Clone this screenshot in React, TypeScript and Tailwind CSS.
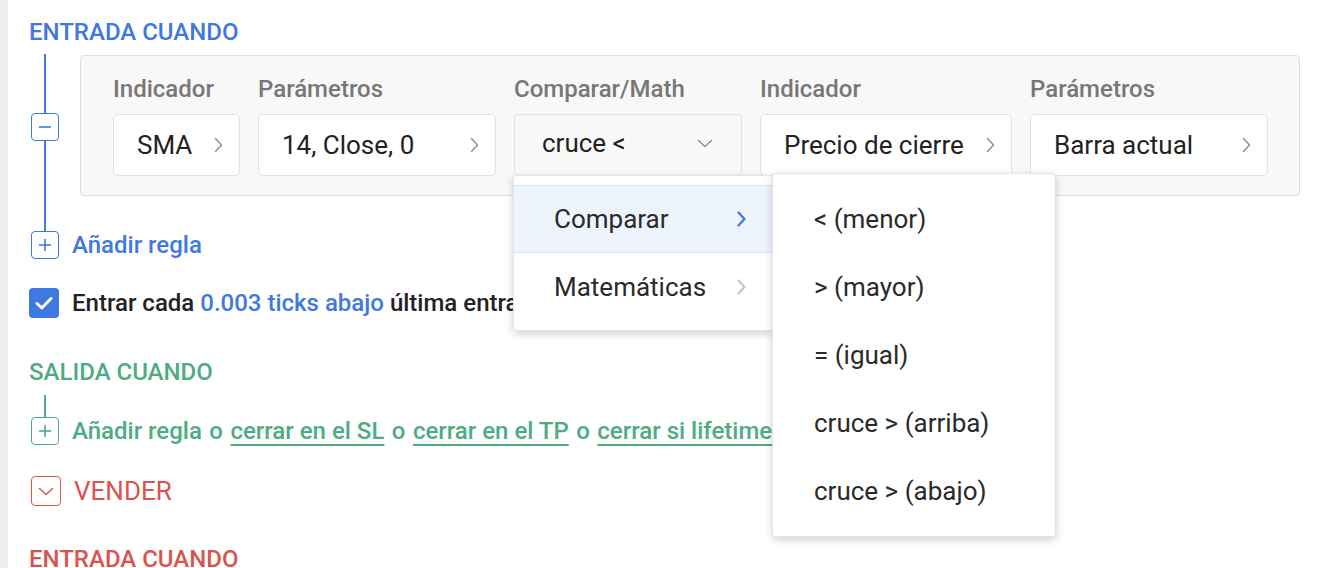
const BLUE = "text-[#3f78e0]";

const ChevronRight = ({ color = "#8c8c8c", w = 1.4 }: { color?: string; w?: number }) => (
	<svg width="9" height="16" viewBox="0 0 9 16" fill="none">
		<polyline points="1.5,1.5 7.5,8 1.5,14.5" stroke={color} strokeWidth={w} strokeLinecap="round" strokeLinejoin="round" />
	</svg>
);

const ChevronDown = ({ color = "#8c8c8c", w = 1.4 }: { color?: string; w?: number }) => (
	<svg width="16" height="9" viewBox="0 0 16 9" fill="none">
		<polyline points="1.5,1.5 8,7.5 14.5,1.5" stroke={color} strokeWidth={w} strokeLinecap="round" strokeLinejoin="round" />
	</svg>
);

const SquareIcon = ({ kind, color }: { kind: "minus" | "plus"; color: string }) => (
	<div
		className="w-[28px] h-[28px] rounded-[4px] flex items-center justify-center bg-white"
		style={{ border: `1.5px solid ${color}` }}>
		<svg width="14" height="14" viewBox="0 0 14 14">
			<line x1="1" y1="7" x2="13" y2="7" stroke={color} strokeWidth="1.6" />
			{kind === "plus" && <line x1="7" y1="1" x2="7" y2="13" stroke={color} strokeWidth="1.6" />}
		</svg>
	</div>
);

type FieldProps = {
	label: string;
	value: string;
	width: string;
};

const Field = ({ label, value, width }: FieldProps) => (
	<div className={`flex flex-col ${width}`}>
		<div className="h-[28px] leading-[28px] text-[24px] font-medium text-[#777777] whitespace-nowrap">{label}</div>
		<div className="mt-[11px] h-[62px] bg-white border-[1.5px] border-[#e2e2e2] rounded-[5px] flex items-center justify-between pl-[23px] pr-[16px]">
			<span className="text-[26px] leading-[30px] text-[#222222] whitespace-nowrap">{value}</span>
			<ChevronRight />
		</div>
	</div>
);

const compareItems = ["< (menor)", "> (mayor)", "= (igual)", "cruce > (arriba)", "cruce > (abajo)"];

const CompareField = () => (
	<div className="flex flex-col w-[228px]">
		<div className="h-[28px] leading-[28px] text-[24px] font-medium text-[#777777] whitespace-nowrap">Comparar/Math</div>
		<div className="relative mt-[11px] h-[62px] bg-[#f9f9f9] border-[1.5px] border-[#e2e2e2] rounded-[5px] flex items-center justify-between pl-[27px] pr-[28px] pb-[4px]">
			<span className="text-[26px] leading-[30px] text-[#222222]">cruce &lt;</span>
			<ChevronDown />

			<div className="absolute left-[-2px] top-[60px] z-10 w-[260px] bg-white rounded-[3px] border border-[#e4e4e4] shadow-[0_3px_8px_rgba(0,0,0,0.18)] py-[9px]">
				<div className="h-[68px] flex items-center justify-between pl-[40px] pr-[26px] bg-[#edf4fe] border-y-[1.5px] border-[#d5e3f9]">
					<span className="text-[26px] text-[#2a2a2a]">Comparar</span>
					<ChevronRight color="#3f78e0" w={2.2} />
				</div>
				<div className="h-[68px] flex items-center justify-between pl-[40px] pr-[26px]">
					<span className="text-[26px] text-[#2a2a2a]">Matemáticas</span>
					<ChevronRight color="#c4c4c4" w={2.2} />
				</div>
			</div>

			<div className="absolute left-[257px] top-[58px] z-20 w-[284px] bg-white rounded-[3px] border border-[#e4e4e4] shadow-[0_3px_8px_rgba(0,0,0,0.18)] py-[11px]">
				{compareItems.map((item) => (
					<div key={item} className="h-[68px] flex items-center pl-[41px]">
						<span className="text-[26px] text-[#2a2a2a] whitespace-nowrap">{item}</span>
					</div>
				))}
			</div>
		</div>
	</div>
);

const App = () => {
	return (
		<div className="h-[568px] overflow-hidden bg-white border-l-[8px] border-[#eeeeee] pl-[21px] pt-[18px] font-['Roboto',sans-serif]">
			<h2 className={`h-[28px] leading-[28px] text-[24px] font-medium ${BLUE}`}>ENTRADA CUANDO</h2>

			<div className="flex mt-[8px]">
				<div className="w-[32px] flex flex-col items-center">
					<div className="w-[1.5px] h-[59px] bg-[#3f78e0]" />
					<SquareIcon kind="minus" color="#3f78e0" />
					<div className="w-[1.5px] h-[90px] bg-[#3f78e0]" />
				</div>
				<div className="ml-[19px] mt-[1px] w-[1220px] h-[141px] bg-[#f8f8f8] border-[1.5px] border-[#dedede] rounded-[4px] pl-[32px] pt-[19px] flex gap-[18px]">
					<Field label="Indicador" value="SMA" width="w-[127px]" />
					<Field label="Parámetros" value="14, Close, 0" width="w-[238px]" />
					<CompareField />
					<Field label="Indicador" value="Precio de cierre" width="w-[252px]" />
					<Field label="Parámetros" value="Barra actual" width="w-[238px]" />
				</div>
			</div>

			<div className="flex items-center h-[28px]">
				<div className="w-[32px] flex justify-center">
					<SquareIcon kind="plus" color="#3f78e0" />
				</div>
				<span className={`ml-[11px] text-[24px] leading-[28px] font-medium ${BLUE}`}>Añadir regla</span>
			</div>

			<div className="flex items-center h-[30px] mt-[29px]">
				<div className="w-[30px] h-[30px] rounded-[4px] bg-[#3f78e0] flex items-center justify-center">
					<svg width="18" height="14" viewBox="0 0 18 14" fill="none">
						<polyline points="2,7.5 6.8,12 16,2.5" stroke="white" strokeWidth="3" strokeLinecap="round" strokeLinejoin="round" />
					</svg>
				</div>
				<p className="ml-[13px] text-[24px] leading-[30px] font-medium text-[#222222] whitespace-nowrap">
					Entrar cada <span className={BLUE}>0.003 ticks abajo</span> última entrada
				</p>
			</div>

			<h2 className="mt-[40px] h-[28px] leading-[28px] text-[24px] font-medium text-[#4dac82]">SALIDA CUANDO</h2>

			<div className="w-[32px] flex justify-center mt-[9px]">
				<div className="w-[1.5px] h-[22px] bg-[#4dac82]" />
			</div>
			<div className="flex items-center h-[28px]">
				<div className="w-[32px] flex justify-center">
					<SquareIcon kind="plus" color="#4dac82" />
				</div>
				<p className="ml-[11px] text-[24px] leading-[28px] font-medium text-[#4dac82] whitespace-nowrap">
					Añadir regla <span className="px-[1.5px]">o</span>{" "}
					<span className="underline underline-offset-[5px] decoration-[1.5px]">cerrar en el SL</span>{" "}
					<span className="px-[1.5px]">o</span>{" "}
					<span className="underline underline-offset-[5px] decoration-[1.5px]">cerrar en el TP</span>{" "}
					<span className="px-[1.5px]">o</span>{" "}
					<span className="underline underline-offset-[5px] decoration-[1.5px]">cerrar si lifetime</span>
				</p>
			</div>

			<div className="flex items-center h-[30px] mt-[31px]">
				<div className="ml-[2px] w-[30px] h-[30px] rounded-[4px] border-[1.5px] border-[#d9534f] flex items-center justify-center">
					<ChevronDown color="#d9534f" w={1.5} />
				</div>
				<span className="ml-[13px] text-[26px] leading-[30px] text-[#d9534f]">VENDER</span>
			</div>

			<h2 className="mt-[39px] h-[28px] leading-[28px] text-[24px] font-medium text-[#d9534f]">ENTRADA CUANDO</h2>
		</div>
	);
};

export default App;
